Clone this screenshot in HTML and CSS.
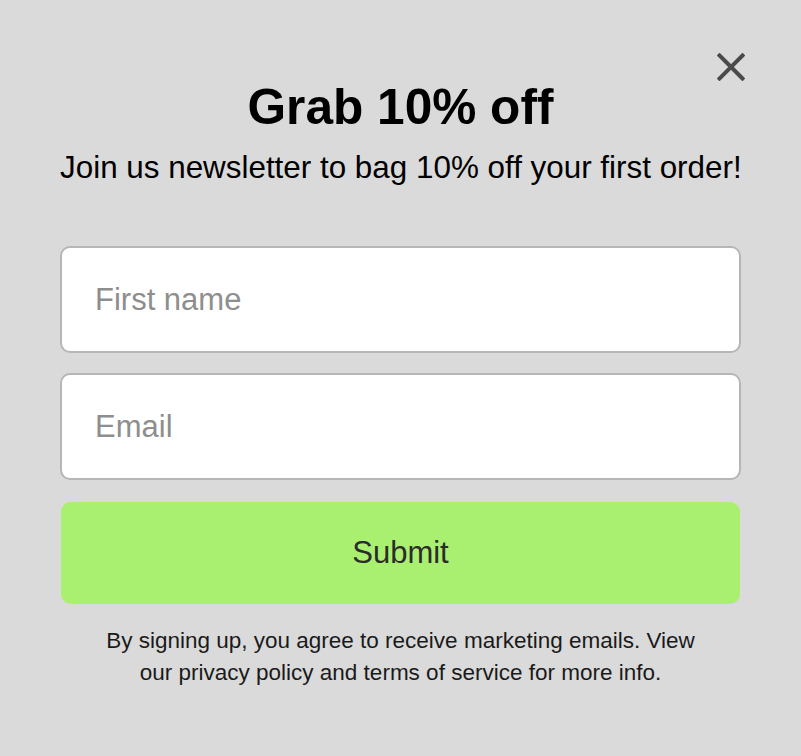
FILE: index.html
```html
<!DOCTYPE html>
<html lang="en">
<head>
<meta charset="utf-8">
<title>Grab 10% off</title>
<link rel="stylesheet" href="styles.css">
</head>
<body>
<div class="modal">
  <button class="close" type="button" aria-label="Close">
    <svg viewBox="0 0 28 28" width="28" height="28"><path d="M2.5 2.5 L25.5 25.5 M25.5 2.5 L2.5 25.5" stroke="#4a4a4a" stroke-width="4" stroke-linecap="square" fill="none"/></svg>
  </button>
  <h1 class="title">Grab 10% off</h1>
  <p class="subtitle">Join us newsletter to bag 10% off your first order!</p>
  <form class="form">
    <input class="field" type="text" placeholder="First name">
    <input class="field" type="email" placeholder="Email">
    <button class="submit" type="button">Submit</button>
  </form>
  <p class="legal">By signing up, you agree to receive marketing emails. View our privacy policy and terms of service for more info.</p>
</div>
</body>
</html>
```

FILE: styles.css
```css
html, body {
  margin: 0;
  padding: 0;
  background: #dadada;
  height: 100%;
}
body {
  font-family: "Liberation Sans", Arial, sans-serif;
  color: #000;
}
.modal {
  position: relative;
  padding: 79px 60px 0 60px;
  display: flex;
  flex-direction: column;
  align-items: stretch;
}
.close {
  position: absolute;
  top: 53px;
  left: 717px;
  width: 28px;
  height: 28px;
  padding: 0;
  border: 0;
  background: none;
  cursor: pointer;
}
.close svg { display: block; }
.title {
  margin: 0;
  font-size: 49.6px;
  line-height: 56px;
  font-weight: 700;
  text-align: center;
}
.subtitle {
  margin: 13px 0 0 0;
  font-size: 31.4px;
  line-height: 40px;
  text-align: center;
  white-space: nowrap;
}
.form {
  margin-top: 58px;
  display: flex;
  flex-direction: column;
  gap: 20px;
}
.field {
  box-sizing: border-box;
  height: 107px;
  width: 100%;
  margin: 0;
  padding: 0 33px;
  border: 2px solid #b6b6b6;
  border-radius: 10px;
  background: #fff;
  font-family: "Liberation Sans", Arial, sans-serif;
  font-size: 31px;
  color: #222;
  outline: none;
}
.field::placeholder {
  color: #8e8e8e;
  opacity: 1;
}
.submit {
  margin: 2px 1px 0 1px;
  height: 102px;
  border: 0;
  border-radius: 10px;
  background: #a9ef70;
  color: #2b2b2b;
  font-family: "Liberation Sans", Arial, sans-serif;
  font-size: 31px;
  cursor: pointer;
}
.legal {
  margin: 21px auto 0 auto;
  max-width: 610px;
  font-size: 22.5px;
  line-height: 32px;
  text-align: center;
  color: #1a1a1a;
}
```
